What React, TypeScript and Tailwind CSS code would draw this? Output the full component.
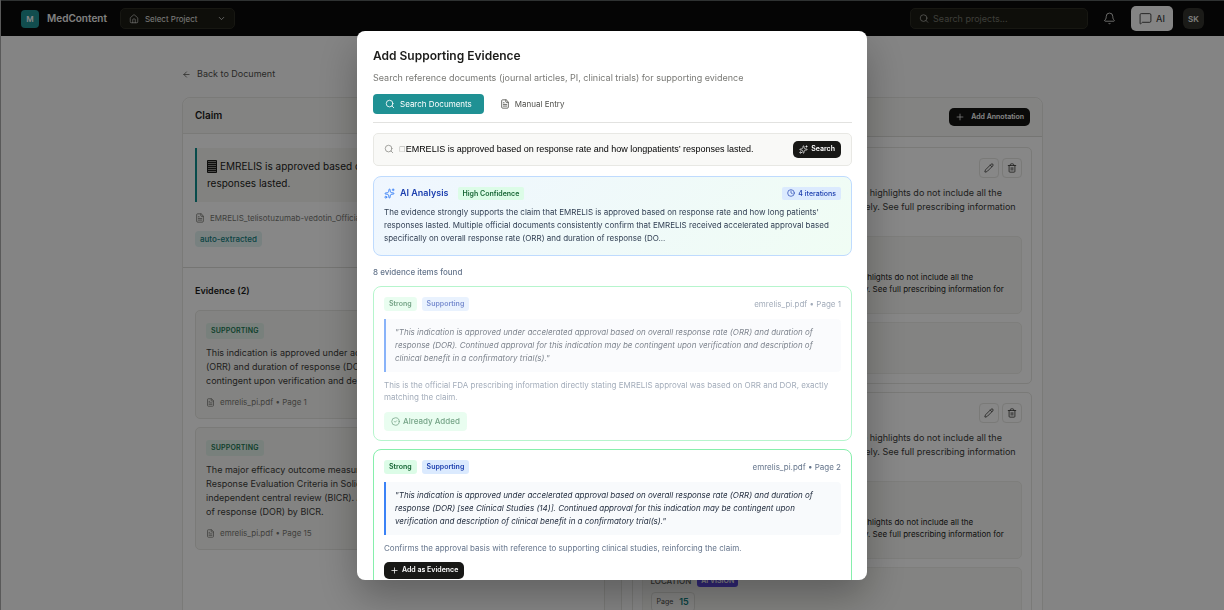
import type { ReactNode } from "react";
import {
  ArrowLeft,
  Bell,
  ChevronDown,
  CircleCheck,
  Clock,
  FileText,
  House,
  MessageSquare,
  Pencil,
  Plus,
  Search,
  Sparkles,
  Trash2,
} from "lucide-react";

function TopBar() {
  return (
    <header className="flex h-9 items-center border-t border-[#5a5f5f] bg-[#0a0a0a] pl-5 pr-5">
      <div className="flex h-[18px] w-[18px] items-center justify-center rounded bg-[#209194] text-[8px] font-semibold text-white">
        M
      </div>
      <span className="ml-2 text-[10px] font-semibold text-[#f4f4f2]">MedContent</span>
      <button className="ml-[13px] flex h-[21px] w-[115px] items-center rounded-[5px] border border-[#2c2c22] bg-[#1b1b14] px-2 text-[8px] text-[#e8e8e4]">
        <House size={10} strokeWidth={1.5} />
        <span className="ml-1.5 flex-1 text-left">Select Project</span>
        <ChevronDown size={9} strokeWidth={2} />
      </button>
      <label className="ml-auto flex h-[21px] w-[178px] items-center gap-1 rounded-[5px] border border-[#2c2c22] bg-[#1b1b14] px-2 text-[#b4b4ae]">
        <Search size={11} strokeWidth={1.75} />
        <input
          aria-label="Search projects"
          placeholder="Search projects..."
          className="w-full min-w-0 bg-transparent text-[9px] outline-none placeholder:text-[#75756c]"
        />
      </label>
      <button aria-label="Notifications" className="ml-[15px] text-[#d4d4d0]">
        <Bell size={13} strokeWidth={1.75} />
      </button>
      <button className="ml-[15px] flex h-[25px] w-[42px] items-center justify-center gap-1 rounded-[5px] bg-[#fafafa] text-[9px] font-medium text-[#3c3c3c]">
        <MessageSquare size={13} strokeWidth={1.75} />
        AI
      </button>
      <button className="ml-[10px] h-[21px] w-[21px] rounded-[6px] bg-[#33332f] text-[8px] font-semibold text-[#f0f0ec]">
        SK
      </button>
    </header>
  );
}

function EvidenceItem({ lines, page }: { lines: string[]; page: number }) {
  return (
    <article className="rounded-[5px] border border-[#e6e6e2] bg-[#f8f8f5] px-[10px] pb-[10px] pt-3">
      <span className="flex h-4 w-fit items-center rounded-[3px] bg-[#e2f2eb] px-[5px] text-[7px] font-semibold tracking-wide text-[#1d7a54]">
        SUPPORTING
      </span>
      <p className="mt-[7px] text-[9px] leading-[14px] text-[#3c3c3a]">
        {lines.map((line) => (
          <span key={line} className="block truncate">{line}</span>
        ))}
      </p>
      <p className="mt-2 flex items-center gap-[5px] text-[8px] leading-3 text-[#787874]">
        <FileText size={9} strokeWidth={2} />
        emrelis_pi.pdf • Page {page}
      </p>
    </article>
  );
}

function ClaimPanel() {
  return (
    <section className="min-w-0 rounded-t-lg border border-[#e6e6e2] bg-white">
      <h2 className="flex h-9 items-center rounded-t-lg border-b border-[#e6e6e2] bg-[#f8f8f5] px-3 text-[10px] font-semibold text-[#1c1c1a]">
        Claim
      </h2>
      <div className="border-b border-[#dededa] px-3 pb-5 pt-[14px]">
        <blockquote className="overflow-hidden border-l-2 border-[#0f8f8f] bg-[#f6f6f2] px-[10px] py-[10px] text-[10px] leading-[17px] text-[#1c1c1a]">
          <span className="flex items-center gap-[3px] whitespace-nowrap">
            <svg width="10" height="13" viewBox="0 0 10 13" fill="#8c8c88" stroke="currentColor">
              <path d="M.5.5h9v12h-9zM0 2.5h10M0 4.5h10M0 6.5h10M0 8.5h10M0 10.5h10" />
            </svg>
            EMRELIS is approved based on response rate and how long patients'
          </span>
          responses lasted.
        </blockquote>
        <p className="mt-[10px] flex items-center gap-[5px] text-[8px] leading-3 text-[#787874]">
          <FileText size={10} strokeWidth={2} />
          EMRELIS_telisotuzumab-vedotin_Official.pdf
        </p>
        <span className="mt-[7px] flex h-4 w-fit items-center rounded bg-[#e2f3f2] px-[5px] text-[8px] font-medium text-[#12807f]">
          auto-extracted
        </span>
      </div>
      <div className="px-3 pb-24 pt-4">
        <h3 className="text-[9px] font-semibold leading-[14px] text-[#1c1c1a]">Evidence (2)</h3>
        <div className="mt-3 flex flex-col gap-2">
          <EvidenceItem
            page={1}
            lines={[
              "This indication is approved under accelerated approval based on overall response",
              "(ORR) and duration of response (DOR). Continued approval may be",
              "contingent upon verification and description of clinical benefit.",
            ]}
          />
          <EvidenceItem
            page={15}
            lines={[
              "The major efficacy outcome measure was overall response rate by",
              "Response Evaluation Criteria in Solid Tumors as assessed by",
              "independent central review (BICR). Additional outcome was duration",
              "of response (DOR) by BICR.",
            ]}
          />
        </div>
      </div>
    </section>
  );
}

function IconButton({ label, children }: { label: string; children: ReactNode }) {
  return (
    <button
      aria-label={label}
      className="flex h-5 w-5 items-center justify-center rounded-[4px] border border-[#e6e6e2] text-[#3c3c3a]"
    >
      {children}
    </button>
  );
}

function Annotation({ children }: { children: ReactNode }) {
  return (
    <article className="rounded-[5px] border border-[#e6e6e2] px-[9px] pb-[9px] pt-[10px]">
      <div className="flex justify-end gap-[3px]">
        <IconButton label="Edit annotation">
          <Pencil size={10} strokeWidth={2} />
        </IconButton>
        <IconButton label="Delete annotation">
          <Trash2 size={10} strokeWidth={2} />
        </IconButton>
      </div>
      <p className="mt-2 whitespace-nowrap text-[9px] leading-[14px] text-[#3c3c3a]">
        HIGHLIGHTS OF PRESCRIBING INFORMATION These highlights do not include all the
        <br />
        guidance needed to use EMRELIS safely and effectively. See full prescribing information
        <br />
        for EMRELIS.
      </p>
      <div className="mt-2 h-[78px] overflow-hidden rounded-[5px] border border-[#eeeeea] bg-[#f8f8f5] px-2 pt-[34px]">
        <p className="whitespace-nowrap text-[8px] leading-3 text-[#1c1c1a]">
          HIGHLIGHTS OF PRESCRIBING INFORMATION: These highlights do not include all the
          <br />
          information needed to use EMRELIS safely and effectively. See full prescribing information for
        </p>
      </div>
      <div className="mt-2 min-h-[52px] rounded-[5px] border border-[#eeeeea] bg-[#f8f8f5] px-2 py-[7px]">
        {children}
      </div>
    </article>
  );
}

function AnnotationsPanel() {
  return (
    <section className="min-w-0 rounded-t-lg border border-[#e6e6e2] bg-white">
      <div className="flex h-[39px] items-center justify-end rounded-t-lg border-b border-[#dededa] bg-[#f8f8f5] px-3">
        <button className="flex h-[18px] items-center gap-1.5 rounded-[5px] bg-[#141412] px-1.5 text-[7px] font-semibold text-white">
          <Plus size={10} strokeWidth={1.75} />
          Add Annotation
        </button>
      </div>
      <div className="flex flex-col gap-2 px-[10px] pt-[10px]">
        <Annotation>{null}</Annotation>
        <Annotation>
          <div className="flex items-center gap-1.5 text-[8px] leading-3 text-[#5a5a56]">
            <span className="font-medium">LOCATION</span>
            <span className="rounded-[3px] bg-[#5b4ae0] px-1 text-[7px] font-semibold text-white">AI VISION</span>
          </div>
          <div className="mt-[5px] flex h-5 w-fit items-center gap-1.5 rounded-[4px] border border-[#e0e0dc] bg-[#fbfbf9] px-[5px] text-[7px] text-[#4a4a46]">
            Page
            <span className="text-[9px] font-semibold text-[#12807f]">15</span>
          </div>
        </Annotation>
      </div>
    </section>
  );
}

type ResultProps = {
  page: number;
  quote: string[];
  note: string[];
  added?: boolean;
};

function EvidenceResult({ page, quote, note, added = false }: ResultProps) {
  return (
    <article className={added ? "rounded-lg border border-[#86efac] opacity-60" : "rounded-lg border border-[#86efac]"}>
      <div className="px-[10px] pb-[9px] pt-[10px]">
        <div className="flex items-center gap-[5px] text-[7px] leading-[14px]">
          <span className="rounded-[3px] bg-[#dcfce7] px-[5px] font-semibold text-[#166534]">Strong</span>
          <span className="rounded-[3px] bg-[#dbeafe] px-[5px] font-semibold text-[#1e40af]">Supporting</span>
          <span className="ml-auto text-[8px] text-[#64748b]">emrelis_pi.pdf • Page {page}</span>
        </div>
        <blockquote className="mt-2 whitespace-nowrap rounded-r border-l-2 border-[#3b82f6] bg-[#f8fafc] px-[9px] py-[7px] text-[8px] italic leading-[13px] text-[#1e293b]">
          {quote.map((line) => (
            <span key={line} className="block">{line}</span>
          ))}
        </blockquote>
        <p className="mt-[7px] whitespace-nowrap text-[8px] leading-3 text-[#64748b]">
          {note.map((line) => (
            <span key={line} className="block">{line}</span>
          ))}
        </p>
        {added ? (
          <span className="mt-[9px] flex h-[19px] w-fit items-center gap-[3px] rounded bg-[#dcfce7] px-[7px] text-[8px] font-medium text-[#166534]">
            <CircleCheck size={9} strokeWidth={2} />
            Already Added
          </span>
        ) : (
          <button className="mt-2 flex h-[17px] items-center gap-[3px] rounded-[5px] bg-[#181816] px-1.5 text-[7px] font-semibold text-white">
            <Plus size={9} strokeWidth={2} />
            Add as Evidence
          </button>
        )}
      </div>
    </article>
  );
}

function EvidenceDialog() {
  return (
    <div
      role="dialog"
      aria-modal="true"
      aria-labelledby="dialog-title"
      className="flex h-[90vh] w-full max-w-[510px] flex-col overflow-hidden rounded-lg bg-white pl-4 pr-[15px] pt-4 shadow-[0_16px_40px_rgba(0,0,0,0.3)]"
    >
      <h1 id="dialog-title" className="text-[12px] font-semibold leading-[18px] text-[#1c1c1a]">
        Add Supporting Evidence
      </h1>
      <p className="mt-[7px] text-[9px] leading-3 text-[#787874]">
        Search reference documents (journal articles, PI, clinical trials) for supporting evidence
      </p>
      <div className="mt-[10px] flex shrink-0 border-b border-[#e2e2e0] pb-2 text-[8px]">
        <button className="flex h-5 items-center gap-[5px] rounded-[4px] bg-[#1f9194] px-3 text-white">
          <Search size={10} strokeWidth={2} />
          Search Documents
        </button>
        <button className="ml-1 flex h-5 items-center gap-[5px] px-3 text-[#50504c]">
          <FileText size={10} strokeWidth={2} />
          Manual Entry
        </button>
      </div>
      <form className="mt-[10px] flex h-[33px] shrink-0 items-center rounded-[5px] border border-[#e8e8e4] bg-[#f9f9f7] px-[10px]">
        <Search size={10} strokeWidth={2} className="text-[#92928e]" />
        <span className="ml-[5px] font-['DejaVu_Sans',sans-serif] text-[7px] text-[#a0a09c]">□</span>
        <input
          aria-label="Claim text"
          defaultValue="EMRELIS is approved based on response rate and how longpatients’ responses lasted."
          className="min-w-0 flex-1 bg-transparent pt-px font-['Liberation_Sans',Arial,sans-serif] text-[9px] text-black outline-none"
        />
        <button type="button" className="flex h-[17px] items-center gap-[3px] rounded-[5px] bg-[#181816] px-1.5 text-[7px] font-semibold text-white">
          <Sparkles size={9} strokeWidth={1.75} />
          Search
        </button>
      </form>
      <section className="mt-[10px] h-20 shrink-0 rounded-lg border border-[#bfdbfe] bg-linear-135 from-[#eff6ff] to-[#f0fdf4] px-[10px] pt-[10px]">
        <div className="flex h-[13px] items-center">
          <Sparkles size={11} strokeWidth={2} className="text-[#3b82f6]" />
          <h2 className="ml-[5px] text-[9px] font-semibold text-[#1e40af]">AI Analysis</h2>
          <span className="ml-[9px] rounded-[2px] bg-[#dcfce7] px-[5px] text-[7px] font-semibold leading-[13px] text-[#166534]">
            High Confidence
          </span>
          <span className="ml-auto flex items-center gap-[3px] rounded-[2px] bg-[#dbeafe] px-[5px] text-[7px] font-medium leading-[13px] text-[#1e40af]">
            <Clock size={8} strokeWidth={2} />4 iterations
          </span>
        </div>
        <p className="mt-[6px] whitespace-nowrap text-[8px] leading-[13px] text-[#334155]">
          The evidence strongly supports the claim that EMRELIS is approved based on response rate and how long patients'
          <br />
          responses lasted. Multiple official documents consistently confirm that EMRELIS received accelerated approval based
          <br />
          specifically on overall response rate (ORR) and duration of response (DO...
        </p>
      </section>
      <p className="mt-[10px] shrink-0 text-[8px] font-medium leading-3 text-[#64748b]">8 evidence items found</p>
      <div className="mt-2 flex min-h-0 flex-1 flex-col gap-2 overflow-hidden">
        <EvidenceResult
          added
          page={1}
          quote={[
            "\"This indication is approved under accelerated approval based on overall response rate (ORR) and duration of",
            "response (DOR). Continued approval for this indication may be contingent upon verification and description of",
            "clinical benefit in a confirmatory trial(s).\"",
          ]}
          note={[
            "This is the official FDA prescribing information directly stating EMRELIS approval was based on ORR and DOR, exactly",
            "matching the claim.",
          ]}
        />
        <EvidenceResult
          page={2}
          quote={[
            "\"This indication is approved under accelerated approval based on overall response rate (ORR) and duration of",
            "response (DOR) [see Clinical Studies (14)]. Continued approval for this indication may be contingent upon",
            "verification and description of clinical benefit in a confirmatory trial(s).\"",
          ]}
          note={["Confirms the approval basis with reference to supporting clinical studies, reinforcing the claim."]}
        />
      </div>
    </div>
  );
}

export default function App() {
  return (
    <div className="h-screen overflow-hidden border-l border-[#a8a8a8] bg-[#fafafa] font-['Inter',sans-serif]">
      <TopBar />
      <main className="mx-auto max-w-[861px]">
        <a href="#document" className="mt-[31px] flex w-fit items-center gap-1.5 text-[9px] leading-[14px] text-[#50504c]">
          <ArrowLeft size={9} strokeWidth={2} />
          Back to Document
        </a>
        <div className="mt-4 grid grid-cols-2 gap-4">
          <ClaimPanel />
          <AnnotationsPanel />
        </div>
      </main>
      <div className="fixed inset-0 flex items-center justify-center bg-black/47">
        <EvidenceDialog />
      </div>
    </div>
  );
}
